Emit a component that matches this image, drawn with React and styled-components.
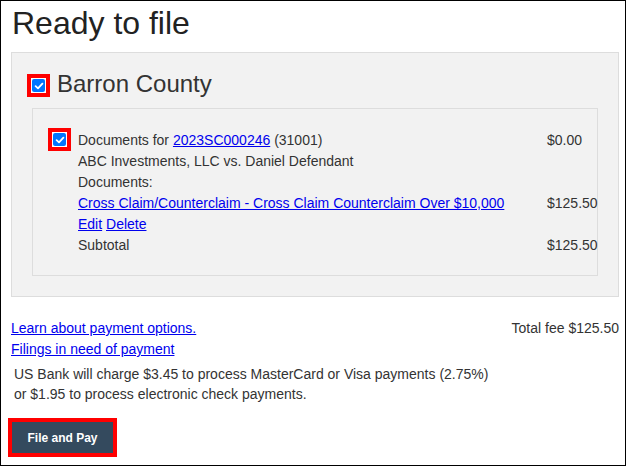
import React from "react";
import styled, { createGlobalStyle } from "styled-components";

const Global = createGlobalStyle`
  html, body { margin: 0; padding: 0; background: #fff; }
  body { font-family: "Liberation Sans", Arial, sans-serif; color: #333; }
  * { box-sizing: border-box; }
`;

const Frame = styled.div`
  width: 626px;
  height: 466px;
  border: 1px solid #000;
  padding: 4px 6px 0 10px;
  overflow: hidden;
`;

const Title = styled.h1`
  margin: 0 0 11px 1px;
  font-size: 32px;
  line-height: 36px;
  font-weight: 400;
  color: #222;
`;

const Panel = styled.section`
  background: #f2f2f2;
  border: 1px solid #ddd;
  padding: 20px;
`;

const CountyRow = styled.div`
  display: flex;
  align-items: flex-start;
  gap: 7px;
  margin: 1px 0 11px -5px;
`;

const CountyName = styled.h2`
  margin: -2px 0 0;
  font-size: 24px;
  line-height: 23px;
  font-weight: 400;
  color: #333;
`;

const Highlight = styled.span`
  display: inline-flex;
  flex: none;
  border: 4px solid #ff0000;
  padding: 1px;
  background: #fff;
`;

const Box = styled.span`
  width: 13px;
  height: 13px;
  border-radius: 2px;
  background: #0075ff;
  display: flex;
  align-items: center;
  justify-content: center;
`;

const Check = () => (
  <Highlight>
    <Box>
      <svg width="10" height="10" viewBox="0 0 10 10">
        <path d="M1.6 5.2 L4 7.4 L8.4 2.6" fill="none" stroke="#fff" strokeWidth="1.8" strokeLinecap="round" strokeLinejoin="round" />
      </svg>
    </Box>
  </Highlight>
);

const Inner = styled.div`
  border: 1px solid #ddd;
  padding: 19px 0 19px 15px;
  display: flex;
  align-items: flex-start;
  gap: 7px;
`;

const Lines = styled.div`
  flex: 1;
  display: grid;
  grid-template-columns: 1fr 50px;
  margin-top: 2px;
  font-size: 14px;
  line-height: 21px;
  color: #333;
`;

const Cell = styled.div`
  white-space: nowrap;
`;

const Amount = styled.div`
  white-space: nowrap;
`;

const Link = styled.a`
  color: #0000ee;
  text-decoration: underline;
  cursor: pointer;
`;

const Footer = styled.div`
  display: flex;
  justify-content: space-between;
  margin-top: 21px;
  font-size: 14px;
  line-height: 21px;
`;

const LinkList = styled.div`
  display: flex;
  flex-direction: column;
`;

const Total = styled.div`
  color: #333;
`;

const Notice = styled.p`
  margin: 4px 0 0 3px;
  font-size: 14px;
  line-height: 20px;
  color: #333;
`;

const PayButton = styled.button`
  margin: 18px 0 0 1px;
  width: 101px;
  height: 31px;
  background: #344a5e;
  color: #fff;
  border: none;
  outline: 4px solid #ff0000;
  font-family: "Liberation Sans", Arial, sans-serif;
  font-size: 12px;
  font-weight: 700;
  padding: 0;
  cursor: pointer;
`;

export default function App() {
  return (
    <>
      <Global />
      <Frame>
        <Title>Ready to file</Title>
        <Panel>
          <CountyRow>
            <Check />
            <CountyName>Barron County</CountyName>
          </CountyRow>
          <Inner>
            <Check />
            <Lines>
              <Cell>
                Documents for <Link>2023SC000246</Link> (31001)
              </Cell>
              <Amount>$0.00</Amount>
              <Cell>ABC Investments, LLC vs. Daniel Defendant</Cell>
              <Amount />
              <Cell>Documents:</Cell>
              <Amount />
              <Cell>
                <Link>Cross Claim/Counterclaim - Cross Claim Counterclaim Over $10,000</Link>
              </Cell>
              <Amount>$125.50</Amount>
              <Cell>
                <Link>Edit</Link> <Link>Delete</Link>
              </Cell>
              <Amount />
              <Cell>Subtotal</Cell>
              <Amount>$125.50</Amount>
            </Lines>
          </Inner>
        </Panel>
        <Footer>
          <LinkList>
            <span><Link>Learn about payment options.</Link></span>
            <span><Link>Filings in need of payment</Link></span>
          </LinkList>
          <Total>Total fee $125.50</Total>
        </Footer>
        <Notice>
          US Bank will charge $3.45 to process MasterCard or Visa payments (2.75%)
          <br />
          or $1.95 to process electronic check payments.
        </Notice>
        <PayButton>File and Pay</PayButton>
      </Frame>
    </>
  );
}
